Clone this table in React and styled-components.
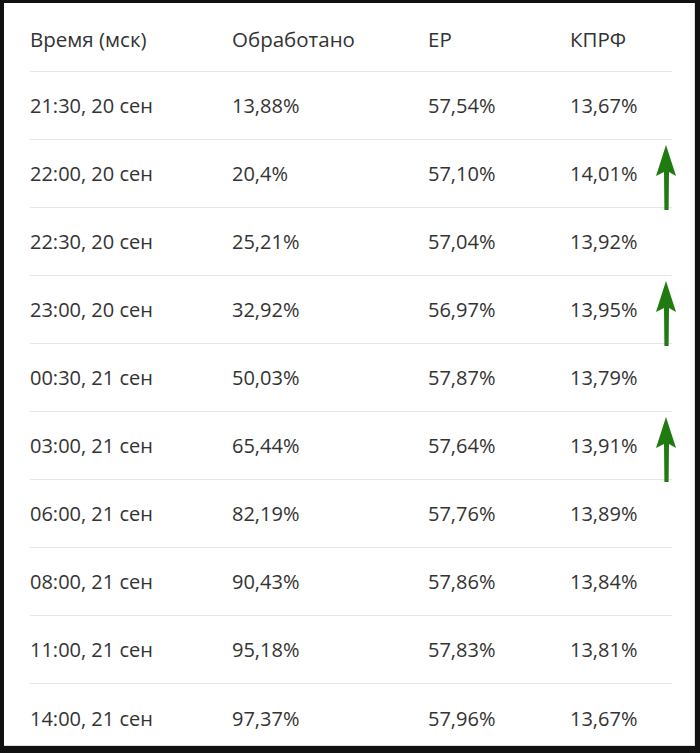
import styled, { createGlobalStyle } from "styled-components";

const Global = createGlobalStyle`
  html, body {
    margin: 0;
    padding: 0;
    background: #111;
  }
  body {
    font-family: "Open Sans", "Noto Sans", sans-serif;
  }
`;

const Frame = styled.div`
  padding: 3px 5px 0 4px;
  height: 753px;
  box-sizing: border-box;
`;

const Card = styled.div`
  background: #fff;
  height: 743px;
  overflow: hidden;
  padding: 0 22px 0 26px;
  border-right: 1px solid #ddd;
  border-bottom: 1px solid #ddd;
  box-sizing: border-box;
`;

const Row = styled.div`
  position: relative;
  display: grid;
  grid-template-columns: 202px 196px 142px 1fr;
  align-items: center;
  height: ${(p) => (p.$head ? "69px" : "68px")};
  border-bottom: 1px solid #e6e6e6;
  box-sizing: border-box;
  color: #333;
  font-size: ${(p) => (p.$head ? "20.5px" : "20px")};
  letter-spacing: 0;
  &:last-child {
    border-bottom: none;
  }
`;

const Cell = styled.div`
  padding-top: ${(p) => (p.$head ? "3px" : "0")};
`;

const ArrowWrap = styled.div`
  position: absolute;
  right: -6px;
  top: 4px;
  width: 24px;
  height: 68px;
`;

const UpArrow = () => (
  <ArrowWrap>
    <svg width="24" height="68" viewBox="0 0 24 68">
      <path
        d="M12 1 L22 32 L15 28 L14.6 66 L10.4 66 L10 28 L2 32 Z"
        fill="#1f7a10"
      />
    </svg>
  </ArrowWrap>
);

const rows = [
  ["21:30, 20 сен", "13,88%", "57,54%", "13,67%", false],
  ["22:00, 20 сен", "20,4%", "57,10%", "14,01%", true],
  ["22:30, 20 сен", "25,21%", "57,04%", "13,92%", false],
  ["23:00, 20 сен", "32,92%", "56,97%", "13,95%", true],
  ["00:30, 21 сен", "50,03%", "57,87%", "13,79%", false],
  ["03:00, 21 сен", "65,44%", "57,64%", "13,91%", true],
  ["06:00, 21 сен", "82,19%", "57,76%", "13,89%", false],
  ["08:00, 21 сен", "90,43%", "57,86%", "13,84%", false],
  ["11:00, 21 сен", "95,18%", "57,83%", "13,81%", false],
  ["14:00, 21 сен", "97,37%", "57,96%", "13,67%", false],
];

export default function App() {
  return (
    <>
      <Global />
      <Frame>
        <Card>
          <Row $head>
            <Cell $head>Время (мск)</Cell>
            <Cell $head>Обработано</Cell>
            <Cell $head>ЕР</Cell>
            <Cell $head>КПРФ</Cell>
          </Row>
          {rows.map(([t, p, er, k, up]) => (
            <Row key={t}>
              <Cell>{t}</Cell>
              <Cell>{p}</Cell>
              <Cell>{er}</Cell>
              <Cell>{k}</Cell>
              {up && <UpArrow />}
            </Row>
          ))}
        </Card>
      </Frame>
    </>
  );
}
